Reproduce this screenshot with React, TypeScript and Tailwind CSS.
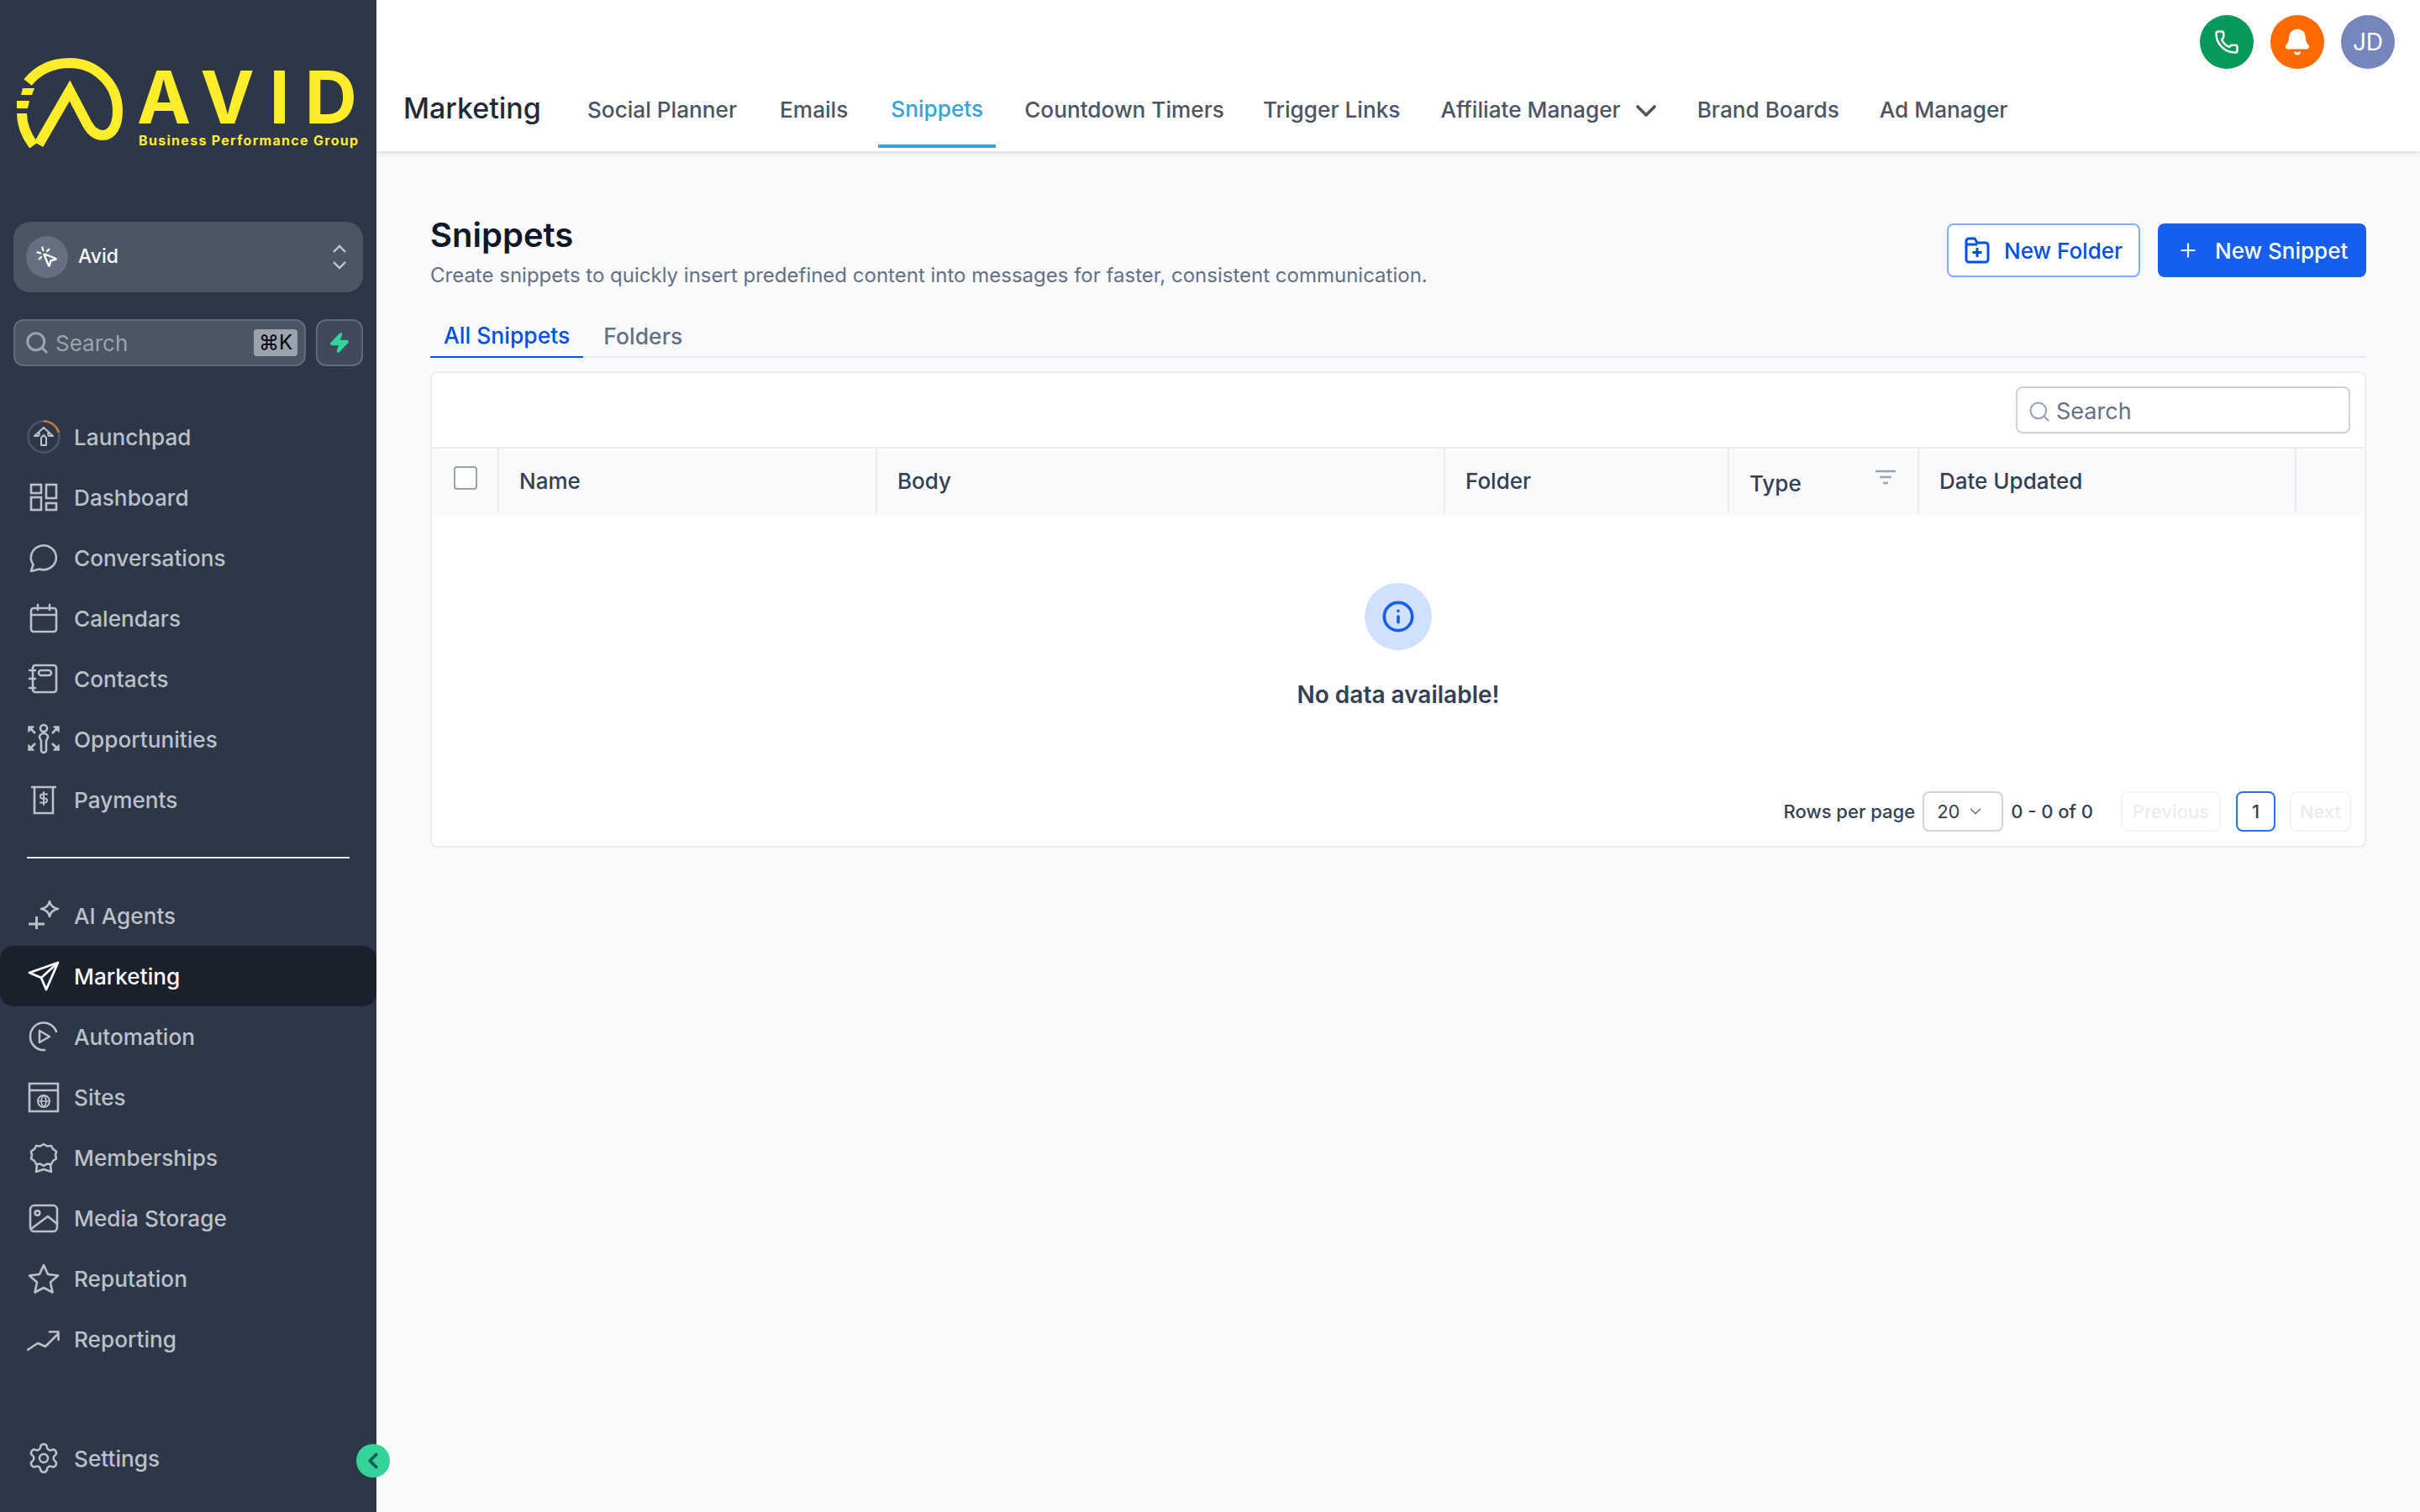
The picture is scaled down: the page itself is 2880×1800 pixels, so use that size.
import type { ReactNode } from "react";
import { Bell, ChevronDown, ChevronLeft, Info, MousePointerClick, Phone, Plus, Search, Settings, Zap } from "lucide-react";

function Glyph({ children }: { children: ReactNode }) {
  return (
    <svg width="40" height="40" viewBox="0 0 40 40" fill="none" stroke="currentColor" strokeWidth="2.6" strokeLinejoin="round" strokeLinecap="round" className="shrink-0">
      {children}
    </svg>
  );
}

const topNav = [
  { label: "Launchpad", icon: (
    <Glyph>
      <circle cx="20" cy="20" r="18.5" stroke="#4b5563" />
      <path d="M20 1.500A18.500 18.500 0 0 1 38 15" stroke="#c77a2f" strokeLinecap="butt" />
      <path d="M20 9l11 10h-5l-1-3M20 9L9 19h5l1-3M17 30V21l3-3 3 3v8M23 30h-6" strokeWidth="2" />
    </Glyph>
  ) },
  { label: "Dashboard", icon: (
    <Glyph>
      <g strokeLinejoin="miter">
        <rect x="5" y="5" width="12" height="10" />
        <rect x="5" y="20" width="12" height="15" />
        <rect x="23" y="5" width="12" height="16" />
        <rect x="23" y="27" width="12" height="8" />
      </g>
    </Glyph>
  ) },
  { label: "Conversations", icon: (
    <Glyph>
      <path d="M5 36l2.500-8A15 14.500 0 1 1 15 33.500z" />
    </Glyph>
  ) },
  { label: "Calendars", icon: (
    <Glyph>
      <rect x="5" y="8" width="30" height="28" rx="3" />
      <path d="M5 16h30M13 4v6M27 4v6" />
    </Glyph>
  ) },
  { label: "Contacts", icon: (
    <Glyph>
      <rect x="7" y="4" width="28" height="32" rx="3" />
      <rect x="14" y="10" width="15" height="6" rx="3" />
      <path d="M3 10h7M3 20h7M3 31h7" />
    </Glyph>
  ) },
  { label: "Opportunities", icon: (
    <Glyph>
      <circle cx="20" cy="7" r="4" />
      <path d="M15 18a5 5 0 0 1 10 0l-2 4v11a3 3 0 0 1-6 0V22z" />
      <path d="M2 5l6 0-6 6zM38 5l-6 0 6 6zM2 33l6 0-6-6zM38 33l-6 0 6-6z" fill="currentColor" strokeWidth="1.600" />
      <path d="M5 8l5 5M35 8l-5 5M5 30l5-5M35 30l-5-5" strokeLinecap="butt" />
    </Glyph>
  ) },
  { label: "Payments", icon: (
    <Glyph>
      <path d="M5 5h30M9 5v31h22V5" strokeLinecap="butt" strokeLinejoin="miter" />
      <path d="M24 13.500h-5.500a2.500 2.500 0 0 0 0 5h3a2.500 2.500 0 0 1 0 5H16M20 11v15" strokeWidth="2" />
    </Glyph>
  ) },
];

const bottomNav = [
  { label: "AI Agents", icon: (
    <Glyph>
      <path d="M2 30h19M11.500 21v15" strokeWidth="3" strokeLinecap="butt" />
      <path d="M27 3c1 5 4 8 10 9-6 1-9 4-10 9-1-5-4-8-10-9 6-1 9-4 10-9z" />
    </Glyph>
  ) },
  { label: "Marketing", active: true, icon: (
    <Glyph>
      <path d="M37 4L3 16l14 6 6 14zM37 4L17 22" strokeWidth="2.800" />
    </Glyph>
  ) },
  { label: "Automation", icon: (
    <Glyph>
      <path d="M35 14A16 16 0 0 0 4 20a16 16 0 0 0 17 16" />
      <path d="M15 13l12 7-12 7z" />
    </Glyph>
  ) },
  { label: "Sites", icon: (
    <Glyph>
      <path d="M3 4h34v33H3zM3 12h34" strokeLinejoin="miter" strokeLinecap="butt" />
      <circle cx="20" cy="25" r="7" strokeWidth="2" />
      <path d="M13 25h14M20 18c-4 4-4 10 0 14M20 18c4 4 4 10 0 14" strokeWidth="1.600" />
    </Glyph>
  ) },
  { label: "Memberships", icon: (
    <Glyph>
      <path d="M20 4l4 2.500 5-.5 2 4 4 2.500-1 4.500 1 4.500-4 2.500-2 4-5-.5-4 2.500-4-2.500-5 .5-2-4-4-2.500 1-4.500-1-4.500 4-2.500 2-4 5 .5z" />
      <path d="M12 29l-1 8 9-3 9 3-1-8" />
    </Glyph>
  ) },
  { label: "Media Storage", icon: (
    <Glyph>
      <rect x="4" y="5" width="32" height="31" rx="5" />
      <circle cx="12.500" cy="14" r="2.800" />
      <path d="M5 33l20-15 11 9" />
    </Glyph>
  ) },
  { label: "Reputation", icon: (
    <Glyph>
      <path d="M20 4l5 11 12 1.500-9 8 2.500 12L20 31l-10.500 5.500L12 24.500l-9-8L15 15z" />
    </Glyph>
  ) },
  { label: "Reporting", icon: (
    <Glyph>
      <path d="M1 33l12-8 9 4 15-15M27 11.500h10.500V21" />
    </Glyph>
  ) },
];

function NavRow({ label, icon, active }: { label: string; icon: ReactNode; active?: boolean }) {
  return (
    <div className={`flex h-[72px] items-center gap-4 rounded-2xl pl-8 text-[26.2px] font-medium ${active ? "bg-[#1a202c] text-white" : "text-[#bcc0c8]"}`}>
      {icon}
      <span className="mt-[2px]">{label}</span>
    </div>
  );
}

const columns = [
  { label: "Checkbox", width: "w-[80px]" },
  { label: "Name", width: "w-[450px]" },
  { label: "Body", width: "w-[676px]" },
  { label: "Folder", width: "w-[338px]" },
  { label: "Type", width: "w-[226px]" },
  { label: "Date Updated", width: "w-[449px]" },
];

const tabs = [
  { label: "Social Planner", spacing: "" },
  { label: "Emails", spacing: "ml-[3px]" },
  { label: "Snippets", spacing: "ml-[2px]" },
  { label: "Countdown Timers", spacing: "" },
  { label: "Trigger Links", spacing: "-ml-[2px]" },
  { label: "Affiliate Manager", spacing: "" },
  { label: "Brand Boards", spacing: "" },
  { label: "Ad Manager", spacing: "" },
];

function Sidebar() {
  return (
    <aside className="relative flex h-full w-[448px] shrink-0 flex-col bg-[#2d3748] pt-[68px] pb-[28px]">
      <div className="flex h-[108px] items-start pl-[20px] text-[#ffed2b]">
        <svg width="128" height="108" viewBox="20 68 128 108" className="shrink-0" fill="none" stroke="currentColor" strokeWidth="12">
          <path d="M33 98C47 81 65 75 83 75c31 0 57 25 57 57 0 18-7 29-18 29-9 0-14-6-18-13L83 108 46 172" />
          <path d="M26 135c0 14 5 26 14 38" />
          <path d="M27 105h14l-3 8H25zM20 120h15l-2 9H20z" fill="currentColor" stroke="none" />
        </svg>
        <div className="ml-[15px] flex flex-col pt-[12px]">
          <span className="h-[66px] text-[86px] leading-[72px] font-bold tracking-[18px] whitespace-nowrap">AVID</span>
          <span className="mt-[11px] pl-[2px] text-[16px] leading-[20px] font-bold tracking-[1.3px] whitespace-nowrap">Business Performance Group</span>
        </div>
      </div>

      <div className="mx-4 mt-[88px] flex h-[84px] items-center rounded-[20px] bg-[#4b5563] pl-[15px] text-white">
        <div className="flex size-[50px] items-center justify-center rounded-full bg-[#667080]">
          <MousePointerClick size={28} strokeWidth={2} />
        </div>
        <span className="mb-[2px] ml-3 text-[23px] font-medium">Avid</span>
        <svg width="16" height="30" viewBox="0 0 16 30" fill="none" stroke="#c5c9cf" strokeWidth="2.400" className="mr-[20px] ml-auto">
          <path d="M1 9l7-7 7 7M1 21l7 7 7-7" />
        </svg>
      </div>

      <div className="mx-4 mt-8 flex gap-3">
        <div className="flex h-14 flex-1 items-center rounded-xl border-2 border-[#606a79] bg-[#4b5563] pr-2 pl-[11px] text-[#9ca3af]">
          <Search size={30} strokeWidth={2.4} />
          <span className="ml-[7px] text-[26px]">Search</span>
          <span className="ml-auto flex h-8 w-[52px] items-center justify-center rounded bg-[#9ca3af] text-[24px] text-black">⌘K</span>
        </div>
        <div className="flex size-14 items-center justify-center rounded-xl border-2 border-[#606a79] bg-[#3f4a5a]">
          <Zap size={26} className="fill-[#34d399] text-[#34d399]" />
        </div>
      </div>

      <nav className="mt-12">
        {topNav.map((item) => (
          <NavRow key={item.label} label={item.label} icon={item.icon} />
        ))}
      </nav>
      <div className="mx-8 mt-8 h-[2px] bg-[#e5e7eb]" />
      <nav className="mt-8">
        {bottomNav.map((item) => (
          <NavRow key={item.label} label={item.label} icon={item.icon} active={item.active} />
        ))}
      </nav>
      <div className="mt-auto">
        <NavRow label="Settings" icon={<Settings size={40} strokeWidth={1.5} className="shrink-0" />} />
      </div>
      <button className="absolute top-[1719px] left-[424px] flex size-10 items-center justify-center rounded-full bg-[#34d399] text-[#115e59]">
        <ChevronLeft size={30} strokeWidth={3} />
      </button>
    </aside>
  );
}

function TopBar() {
  return (
    <header className="h-[180px] shrink-0 bg-white shadow-[0_2px_6px_rgba(16,24,40,0.14)]">
      <div className="flex h-[100px] items-start justify-end gap-5 pt-[18px] pr-[30px]">
        <div className="flex size-16 items-center justify-center rounded-full bg-[#059a5b] text-white">
          <Phone size={30} strokeWidth={2} />
        </div>
        <div className="flex size-16 items-center justify-center rounded-full bg-[#ff6a00] text-white">
          <Bell size={34} className="fill-white" />
        </div>
        <div className="flex size-16 items-center justify-center rounded-full bg-[#7686bb] text-[28px] text-white">JD</div>
      </div>
      <div className="flex h-[80px] items-start pl-8">
        <h2 className="mt-[5px] mr-[41px] text-[34px] leading-[48px] font-medium text-[#1f2937]">Marketing</h2>
        <div className="flex gap-5">
          {tabs.map((tab) =>
            tab.label === "Snippets" ? (
              <div key={tab.label} className={`flex h-[76px] items-start border-b-4 border-[#38a0db] px-[15px] pt-[10px] text-[26.2px] leading-[40px] font-medium text-[#38a0db] ${tab.spacing}`}>
                {tab.label}
              </div>
            ) : (
              <div key={tab.label} className={`flex h-[72px] items-start gap-[10px] px-[14px] pt-[11px] text-[26.2px] leading-[40px] font-medium text-[#4b5563] ${tab.spacing}`}>
                {tab.label}
                {tab.label === "Affiliate Manager" && <ChevronDown size={40} strokeWidth={2.2} className="-mr-[7px] mt-[1px]" />}
              </div>
            ),
          )}
        </div>
      </div>
    </header>
  );
}

function Pagination() {
  return (
    <div className="mt-[95px] flex h-12 items-center justify-end pr-[16px] text-[22px] font-medium text-[#344054]">
      <span>Rows per page</span>
      <div className="ml-[9px] flex h-12 w-[96px] items-center justify-between rounded-lg border-2 border-[#d0d5dd] bg-white pr-5 pl-[15px] font-normal shadow-[0_1px_2px_rgba(16,24,40,0.05)]">
        20
        <ChevronDown size={22} strokeWidth={1.6} className="text-[#667085]" />
      </div>
      <span className="ml-[9px]">0 - 0 of 0</span>
      <div className="ml-[33px] flex h-12 w-[119px] items-center justify-center rounded-lg border-2 border-[#f2f4f7] text-[#eaecf0]">Previous</div>
      <div className="ml-[18px] flex h-12 w-[47px] items-center justify-center rounded-lg border-2 border-[#2970ff]">1</div>
      <div className="ml-[17px] flex h-12 w-[73px] items-center justify-center rounded-lg border-2 border-[#f2f4f7] text-[#eaecf0]">Next</div>
    </div>
  );
}

function SnippetsTable() {
  return (
    <section className="mt-4 rounded-lg border-2 border-[#eaecf0] bg-white pb-[17px]">
      <div className="flex h-[90px] justify-end border-b-2 border-[#eaecf0] pt-4 pr-[17px]">
        <div className="flex h-14 w-[398px] items-center rounded-lg border-2 border-[#d0d5dd] bg-white pt-[4px] pl-3 text-[27px] text-[#667085] shadow-[0_1px_2px_rgba(16,24,40,0.05)]">
          <Search size={28} strokeWidth={1.8} className="text-[#98a2b3]" />
          <span className="ml-[6px]">Search</span>
        </div>
      </div>
      <div className="flex h-[80px] bg-[#f9fafb] pb-[3px] text-[26px] font-medium text-[#344054]">
        {columns.map((col) => (
          <div key={col.label} className={`flex shrink-0 items-center border-r-2 border-[#eaecf0] ${col.width} ${col.label === "Checkbox" ? "" : "pl-[24px]"}`}>
            {col.label === "Checkbox" ? (
              <div className="mb-[8px] ml-[26px] size-[28px] rounded border-2 border-[#98a2b3] bg-white" />
            ) : col.label === "Type" ? (
              <div className="flex w-full items-start pt-[6px]">
                <span>Type</span>
                <svg width="24" height="18" viewBox="0 0 24 18" className="mt-[3px] mr-[26px] ml-auto" fill="none" stroke="#98a2b3" strokeWidth="2.400">
                  <path d="M0 2h24M5 9h14M9 16h6" />
                </svg>
              </div>
            ) : (
              col.label
            )}
          </div>
        ))}
      </div>
      <div className="mt-[80px] flex flex-col items-center">
        <div className="flex size-20 items-center justify-center rounded-full bg-[#d1e0ff] text-[#155eef]">
          <Info size={40} strokeWidth={2.2} />
        </div>
        <p className="mt-[33px] text-[28px] leading-[40px] font-semibold text-[#344054]">No data available!</p>
      </div>
      <Pagination />
    </section>
  );
}

export default function App() {
  return (
    <div className="flex h-screen w-full overflow-hidden bg-[#f9fafb] font-['Inter',sans-serif]">
      <Sidebar />
      <main className="flex min-w-0 flex-1 flex-col">
        <TopBar />
        <div className="px-[64px] pt-[76px]">
          <div className="flex items-start justify-between">
            <div>
              <h1 className="text-[40px] leading-[48px] font-semibold text-[#101828]">Snippets</h1>
              <p className="mt-2 text-[24px] leading-[32px] text-[#667085]">Create snippets to quickly insert predefined content into messages for faster, consistent communication.</p>
            </div>
            <div className="mt-[10px] flex gap-[21px]">
              <button className="flex h-16 w-[230px] items-center gap-[17px] rounded-lg border-2 border-[#84adff] bg-white pl-[19px] text-[26px] font-medium text-[#004eeb] shadow-[0_1px_2px_rgba(16,24,40,0.05)]">
                <svg width="30" height="32" viewBox="0 0 30 32" fill="none" stroke="currentColor" strokeWidth="3">
                  <path d="M2 27V5a3 3 0 0 1 3-3h7l3 5h10a3 3 0 0 1 3 3v17a3 3 0 0 1-3 3H5a3 3 0 0 1-3-3zM2 9h13M15 13v11M9.500 18.500h11" />
                </svg>
                New Folder
              </button>
              <button className="flex h-16 w-[248px] items-center gap-[19px] rounded-lg bg-[#155eef] pl-[23px] text-[26px] font-medium text-white">
                <Plus size={26} strokeWidth={2} />
                New Snippet
              </button>
            </div>
          </div>
          <div className="mt-[34px] flex h-12 gap-[24px] border-b-2 border-[#eaecf0] text-[26.5px] font-medium">
            <div className="flex h-12 items-center border-b-2 border-[#004eeb] px-4 pb-[2px] text-[#004eeb]">All Snippets</div>
            <div className="flex h-12 items-center pb-[2px] text-[#667085]">Folders</div>
          </div>
          <SnippetsTable />
        </div>
      </main>
    </div>
  );
}
